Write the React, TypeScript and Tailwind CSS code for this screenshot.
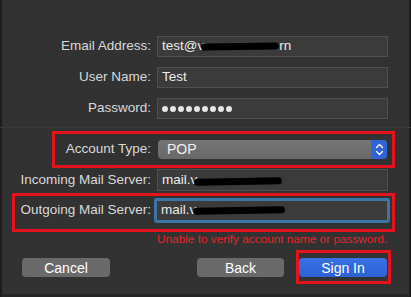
import React from "react";

function Field({ children, className = "" }: { children?: React.ReactNode; className?: string }) {
  return (
    <div
      className={
        "w-[231px] h-[21px] bg-[#3b3b3b] border border-[#505050] flex items-center pl-[4px] text-[13.5px] text-[#ececec] " +
        className
      }
    >
      {children}
    </div>
  );
}

function Row({ label, children, className = "" }: { label: string; children: React.ReactNode; className?: string }) {
  return (
    <div className={"flex items-center " + className}>
      <div className="w-[152px] text-right text-[13.5px] text-[#d9d9d9] pr-[1px]">{label}</div>
      <div className="ml-[5px]">{children}</div>
    </div>
  );
}

function Blob({ w, className = "" }: { w: number; className?: string }) {
  return (
    <span
      className={"inline-block h-[7px] bg-black rounded-full align-middle -rotate-1 " + className}
      style={{ width: w }}
    />
  );
}

export default function App() {
  return (
    <div className="w-[411px] h-[297px] bg-[#323232] overflow-hidden font-['Liberation_Sans',Arial,sans-serif] shadow-[inset_2px_0_0_#1d1d1d,inset_-2px_0_0_#1d1d1d,inset_0_-3px_0_#262626]">
      <div className="pt-[36px]">
        <Row label="Email Address:">
          <Field>
            test@v<Blob w={78} className="-ml-[3px]" />
            rn
          </Field>
        </Row>
        <Row label="User Name:" className="mt-[10px]">
          <Field>Test</Field>
        </Row>
        <Row label="Password:" className="mt-[10px]">
          <Field className="gap-[2px]">
            {Array.from({ length: 9 }).map((_, i) => (
              <span key={i} className="w-[6px] h-[6px] rounded-full bg-[#e6e6e6]" />
            ))}
          </Field>
        </Row>
      </div>

      <div className="mt-[8px] h-px bg-[#393939]" />

      {/* Account type */}
      <div className="mt-[3px] ml-[52px] w-[343px] h-[37px] border-[3px] border-[#e3141c] flex items-center">
        <div className="w-[97px] text-right text-[13.5px] text-[#d9d9d9] pr-[1px]">Account Type:</div>
        <div className="ml-[6px] w-[229px] h-[19px] rounded-[4px] bg-gradient-to-b from-[#757575] to-[#686868] flex items-center overflow-hidden">
          <span className="flex-1 pl-[9px] text-[14px] text-[#f0f0f0]">POP</span>
          <span className="w-[16px] h-full bg-[#2f64d6] flex items-center justify-center">
            <svg width="9" height="13" viewBox="0 0 9 13" fill="none" stroke="white" strokeWidth="1.3" strokeLinecap="round" strokeLinejoin="round">
              <path d="M1.5 4.5 L4.5 1.5 L7.5 4.5" />
              <path d="M1.5 8.5 L4.5 11.5 L7.5 8.5" />
            </svg>
          </span>
        </div>
      </div>

      <Row label="Incoming Mail Server:" className="mt-[1px]">
        <Field className="h-[22px]">
          mail.v<Blob w={88} className="-ml-[3px] mt-[3px]" />
        </Field>
      </Row>

      {/* Outgoing */}
      <div className="mt-[2px] ml-[12px] w-[383px] h-[39px] border-[3px] border-[#e3141c] flex items-start">
        <div className="w-[137px] h-[25px] mt-[2px] flex items-center justify-end text-[13.5px] text-[#d9d9d9] pr-[1px]">
          Outgoing Mail Server:
        </div>
        <div className="ml-[2px] mt-[2px] w-[236px] h-[25px] border-[3px] border-[#3b76a6] rounded-[3px] bg-[#3b3b3b] flex items-center pl-[4px] text-[13.5px] text-[#ececec]">
          mail.v<Blob w={92} className="-ml-[3px]" />
        </div>
      </div>

      <div className="mt-[1px] pl-[157px] leading-[13px] text-[11.8px] text-[#e3262b]">
        Unable to verify account name or password.
      </div>

      <div className="mt-[4px] h-[34px] flex items-center">
        <button className="ml-[22px] w-[88px] h-[19px] rounded-[4px] bg-[#6a6a6a] text-[14px] text-white font-medium">
          Cancel
        </button>
        <button className="ml-[87px] w-[87px] h-[19px] rounded-[4px] bg-[#6a6a6a] text-[14px] text-white font-medium">
          Back
        </button>
        <div className="ml-[12px] w-[95px] h-[34px] border-[3px] border-[#e3141c] flex items-center">
          <button className="w-[88px] h-[19px] rounded-[4px] bg-gradient-to-b from-[#3a70e6] to-[#2c62d6] text-[14px] text-white font-medium">
            Sign In
          </button>
        </div>
      </div>
    </div>
  );
}
